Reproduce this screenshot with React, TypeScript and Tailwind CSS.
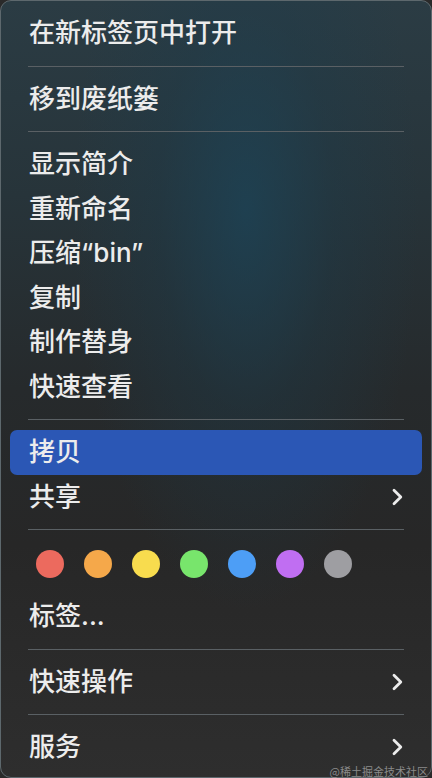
import React from "react";

const Chevron = () => (
  <svg width="14" height="20" viewBox="0 0 14 20" fill="none" className="shrink-0">
    <path d="M4 3.2 L10.8 10 L4 16.8" stroke="#ececec" strokeWidth="2.8" strokeLinecap="round" strokeLinejoin="round" />
  </svg>
);

const Sep = () => (
  <div className="h-[21px] flex items-center px-[28px]">
    <div className="h-px w-full bg-[#5a6064]" />
  </div>
);

const Item = ({ label, sub, active }: { label: string; sub?: boolean; active?: boolean }) => (
  <div className="h-[44.5px] px-[10px]">
    <div
      className={
        "h-full rounded-[7px] flex items-center justify-between pl-[19px] pr-[18px] " +
        (active ? "bg-[#2b57b5]" : "")
      }
    >
      <span className="text-[26px] leading-none font-medium text-[#ececec]">{label}</span>
      {sub && <Chevron />}
    </div>
  </div>
);

const dots = ["#ec6a5e", "#f5a84a", "#f8dc4e", "#78e56c", "#4d9ef6", "#c06ef2", "#9e9ea2"];

export default function App() {
  return (
    <div
      className="relative w-[432px] h-[778px] bg-[#2a2a2a] overflow-hidden"
      style={{ fontFamily: '"Inter", "Noto Sans CJK SC", sans-serif' }}
    >
      <div className="absolute inset-0 rounded-[11px] border border-[#5d686d] bg-[radial-gradient(ellipse_at_57%_27%,rgba(28,68,88,0.75)_0%,rgba(28,60,76,0.35)_25%,transparent_50%),linear-gradient(180deg,#2b3c44_0%,#27343a_25%,#262a2c_50%,#272727_70%,#2e2e2e_100%)]" />
      <div className="relative flex flex-col pt-[11px]">
        <Item label="在新标签页中打开" />
        <Sep />
        <Item label="移到废纸篓" />
        <Sep />
        <Item label="显示简介" />
        <Item label="重新命名" />
        <Item label="压缩“bin”" />
        <Item label="复制" />
        <Item label="制作替身" />
        <Item label="快速查看" />
        <Sep />
        <Item label="拷贝" active />
        <Item label="共享" sub />
        <Sep />
        <div className="h-[54px] flex items-start pt-[10px] pl-[36px] gap-[20px]">
          {dots.map((c) => (
            <div key={c} className="w-[28px] h-[28px] rounded-full" style={{ backgroundColor: c }} />
          ))}
        </div>
        <Item label="标签..." />
        <Sep />
        <Item label="快速操作" sub />
        <Sep />
        <Item label="服务" sub />
      </div>
      <div
        className="absolute right-[4px] bottom-[1px] text-[11px] leading-none text-[#8a8a8a]"
        style={{ fontFamily: '"Noto Sans CJK SC", sans-serif' }}
      >
        @稀土掘金技术社区
      </div>
    </div>
  );
}
